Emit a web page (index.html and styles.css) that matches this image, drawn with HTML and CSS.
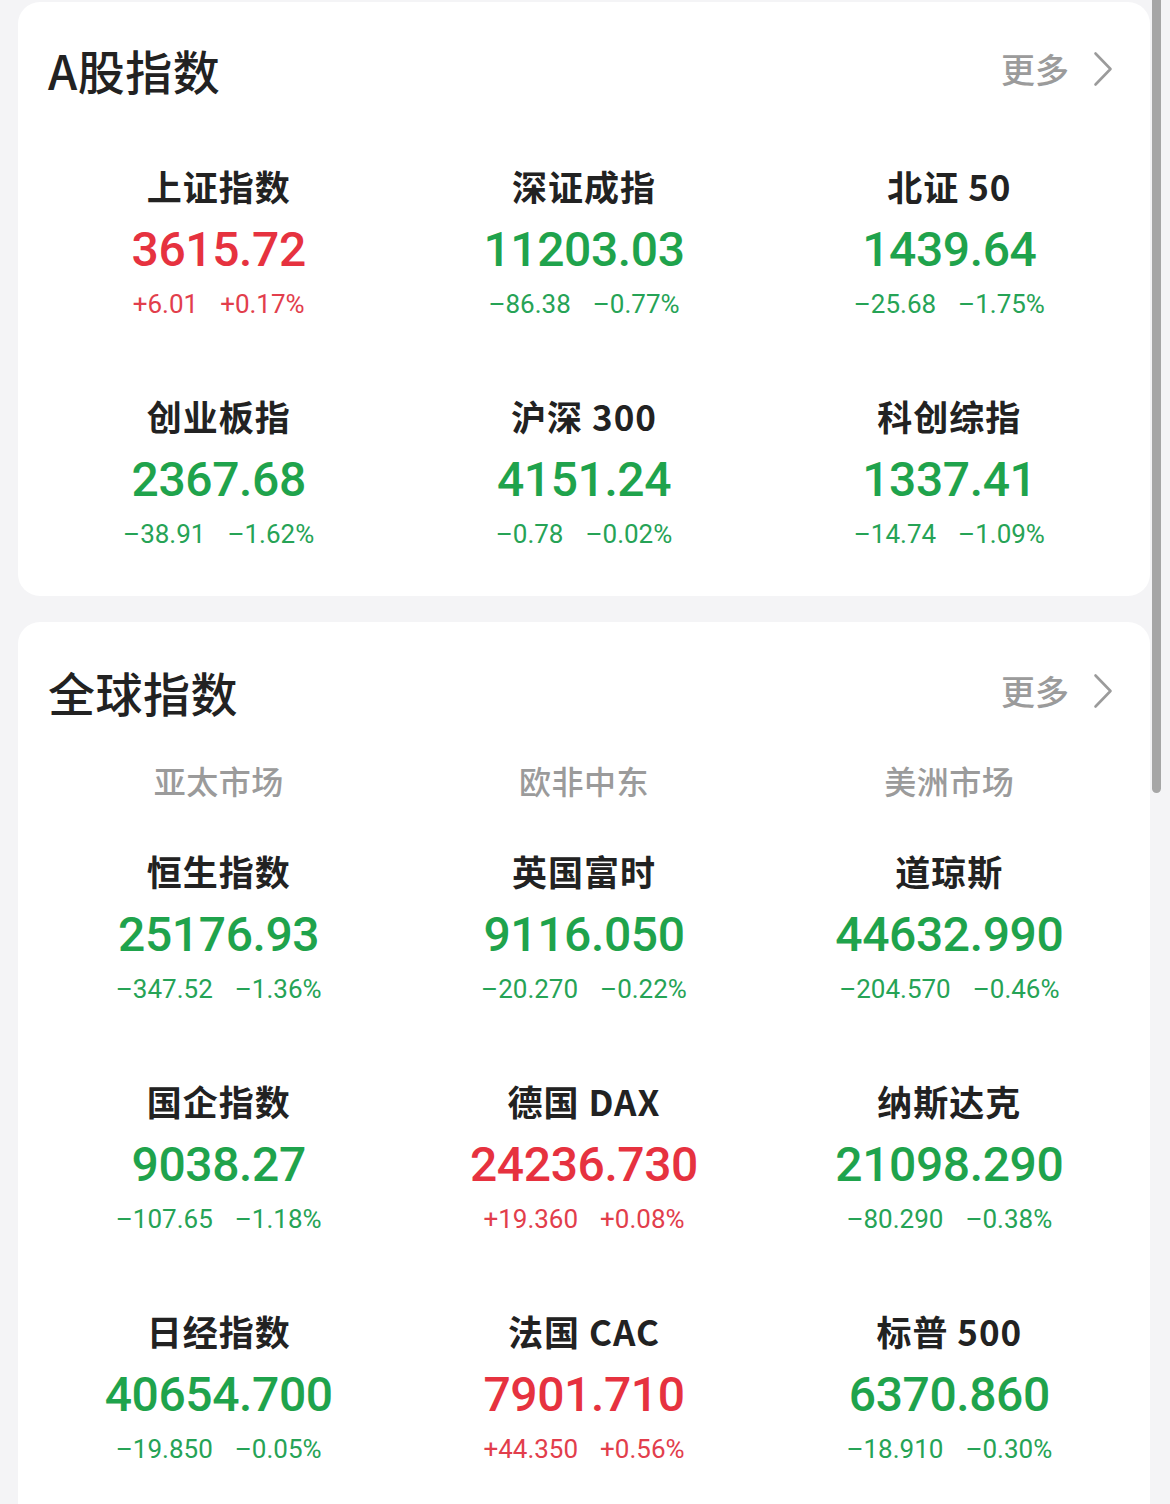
FILE: index.html
```html
<!DOCTYPE html>
<html lang="zh-CN">
<head>
<meta charset="utf-8">
<title>指数</title>
<link rel="stylesheet" href="styles.css">
</head>
<body>
<div class="page">
  <section class="card card-a">
    <header class="card-head">
      <h2 class="card-title">A股指数</h2>
      <a class="more">更多<svg class="chev" width="20" height="36" viewBox="0 0 20 36"><polyline points="2.5,2.5 17.5,18 2.5,33.5" fill="none" stroke="#9b9b9b" stroke-width="2.6" stroke-linecap="round" stroke-linejoin="round"/></svg></a>
    </header>
    <div class="grid">
      <div class="cell"><div class="name">上证指数</div><div class="value up">3615.72</div><div class="chg up"><span>+6.01</span><span>+0.17%</span></div></div>
      <div class="cell"><div class="name">深证成指</div><div class="value down">11203.03</div><div class="chg down"><span>–86.38</span><span>–0.77%</span></div></div>
      <div class="cell"><div class="name">北证 50</div><div class="value down">1439.64</div><div class="chg down"><span>–25.68</span><span>–1.75%</span></div></div>
      <div class="cell"><div class="name">创业板指</div><div class="value down">2367.68</div><div class="chg down"><span>–38.91</span><span>–1.62%</span></div></div>
      <div class="cell"><div class="name">沪深 300</div><div class="value down">4151.24</div><div class="chg down"><span>–0.78</span><span>–0.02%</span></div></div>
      <div class="cell"><div class="name">科创综指</div><div class="value down">1337.41</div><div class="chg down"><span>–14.74</span><span>–1.09%</span></div></div>
    </div>
  </section>

  <section class="card card-b">
    <header class="card-head">
      <h2 class="card-title">全球指数</h2>
      <a class="more">更多<svg class="chev" width="20" height="36" viewBox="0 0 20 36"><polyline points="2.5,2.5 17.5,18 2.5,33.5" fill="none" stroke="#9b9b9b" stroke-width="2.6" stroke-linecap="round" stroke-linejoin="round"/></svg></a>
    </header>
    <div class="tabs">
      <div class="tab">亚太市场</div>
      <div class="tab">欧非中东</div>
      <div class="tab">美洲市场</div>
    </div>
    <div class="grid">
      <div class="cell"><div class="name">恒生指数</div><div class="value down">25176.93</div><div class="chg down"><span>–347.52</span><span>–1.36%</span></div></div>
      <div class="cell"><div class="name">英国富时</div><div class="value down">9116.050</div><div class="chg down"><span>–20.270</span><span>–0.22%</span></div></div>
      <div class="cell"><div class="name">道琼斯</div><div class="value down">44632.990</div><div class="chg down"><span>–204.570</span><span>–0.46%</span></div></div>
      <div class="cell"><div class="name">国企指数</div><div class="value down">9038.27</div><div class="chg down"><span>–107.65</span><span>–1.18%</span></div></div>
      <div class="cell"><div class="name">德国 DAX</div><div class="value up">24236.730</div><div class="chg up"><span>+19.360</span><span>+0.08%</span></div></div>
      <div class="cell"><div class="name">纳斯达克</div><div class="value down">21098.290</div><div class="chg down"><span>–80.290</span><span>–0.38%</span></div></div>
      <div class="cell"><div class="name">日经指数</div><div class="value down">40654.700</div><div class="chg down"><span>–19.850</span><span>–0.05%</span></div></div>
      <div class="cell"><div class="name">法国 CAC</div><div class="value up">7901.710</div><div class="chg up"><span>+44.350</span><span>+0.56%</span></div></div>
      <div class="cell"><div class="name">标普 500</div><div class="value down">6370.860</div><div class="chg down"><span>–18.910</span><span>–0.30%</span></div></div>
    </div>
  </section>
</div>
<div class="scroll-thumb"></div>
</body>
</html>
```

FILE: styles.css
```css
html, body {
  margin: 0;
  padding: 0;
}
body {
  width: 1170px;
  height: 1504px;
  overflow: hidden;
  background: #f4f4f6;
  font-family: "Noto Sans CJK SC", "Noto Sans", sans-serif;
  color: #222;
  position: relative;
}
.page {
  padding-top: 2px;
}
.card {
  background: #fff;
  margin: 0 20px 0 18px;
  border-radius: 22px;
  padding: 40px 18px 45px 18px;
}
.card-b {
  margin-top: 26px;
  padding-top: 42px;
  padding-bottom: 60px;
}
.card-head {
  display: flex;
  align-items: center;
  justify-content: space-between;
  padding: 0 19px 0 12px;
  height: 56px;
}
.card-title {
  margin: 0;
  font-size: 47px;
  font-weight: 500;
  line-height: 56px;
  color: #222;
  letter-spacing: 0.5px;
}
.more {
  display: flex;
  align-items: center;
  font-size: 34px;
  line-height: 40px;
  font-weight: 500;
  color: #9b9b9b;
  margin-top: -2px;
}
.chev {
  margin-left: 24px;
  display: block;
}
.card-a .grid {
  margin-top: 63px;
}
.tabs {
  display: grid;
  grid-template-columns: repeat(3, 1fr);
  margin-top: 40px;
}
.tab {
  text-align: center;
  font-size: 32px;
  line-height: 40px;
  font-weight: 500;
  color: #9b9b9b;
  letter-spacing: 0.5px;
}
.card-b .grid {
  margin-top: 46px;
}
.grid {
  display: grid;
  grid-template-columns: repeat(3, 1fr);
  row-gap: 70px;
}
.cell {
  display: flex;
  flex-direction: column;
  align-items: center;
}
.name {
  font-size: 35px;
  line-height: 50px;
  font-weight: 700;
  color: #222;
  height: 50px;
  letter-spacing: 1px;
}
.value {
  font-family: Roboto, "Noto Sans", sans-serif;
  font-size: 48px;
  font-weight: 500;
  line-height: 78px;
  height: 76px;
  letter-spacing: -0.4px;
}
.chg {
  font-family: Roboto, "Noto Sans", sans-serif;
  font-size: 26px;
  line-height: 34px;
  height: 34px;
  display: flex;
  gap: 22px;
}
.up { color: #e6323f; }
.down { color: #1fa34c; }
.chg.up { color: #e23e4c; }
.chg.down { color: #26a356; }
.scroll-thumb {
  position: absolute;
  left: 1152px;
  top: 0;
  width: 9px;
  height: 793px;
  background: #a6a6a6;
  border-radius: 0 0 5px 5px;
}
```
